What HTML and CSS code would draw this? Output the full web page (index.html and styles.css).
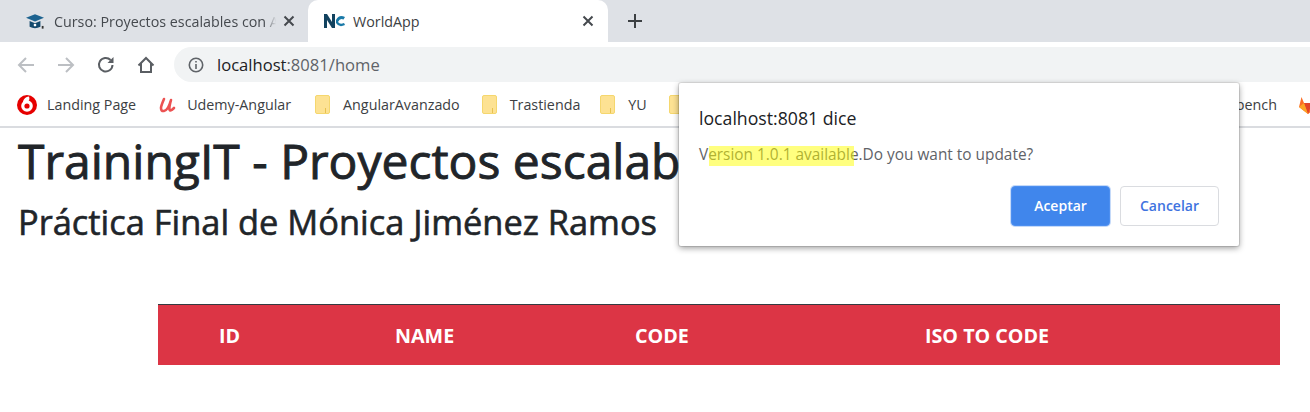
FILE: index.html
```html
<!DOCTYPE html>
<html lang="en">
<head>
  <meta charset="UTF-8">
  <title>WorldApp</title>
  <link rel="stylesheet" href="styles.css">
</head>
<body>
  <!-- Browser chrome -->
  <div class="tabstrip">
    <div class="tab">
      <svg class="tab-icon" viewBox="0 0 20 20"><path d="M0 6.500 10 2.500 20 6.500 10 10.500z" fill="#1d6390"/><path d="M4 10 10 12.500 16 10V16.500Q10 19.500 4 16.500z" fill="#14496d"/><circle cx="10" cy="14.500" r="1.500" fill="#fff"/><rect x="17.500" y="15.500" width="2" height="3" fill="#333"/></svg>
      <span class="tab-title fade">Curso: Proyectos escalables con A</span>
      <svg class="tab-close" viewBox="0 0 12 12"><path d="M1.500 1.500 10.500 10.500M10.500 1.500 1.500 10.500"/></svg>
    </div>
    <div class="tab active">
      <svg class="tab-icon" viewBox="0 0 22 16"><path d="M1 15V1H4L9 9V1H12V15H9L4 7V15z" fill="#12425f"/><path d="M13 7Q16 1 22 4L20.500 6.500Q17 4.500 15 9Q17 12 21 10L22 12Q16 15 13 10z" fill="#1a7aa8"/></svg>
      <span class="tab-title">WorldApp</span>
      <svg class="tab-close" viewBox="0 0 12 12"><path d="M1.500 1.500 10.500 10.500M10.500 1.500 1.500 10.500"/></svg>
    </div>
    <svg class="new-tab" viewBox="0 0 16 16"><path d="M8 1V15M1 8H15"/></svg>
  </div>

  <div class="toolbar">
    <svg class="nav-btn off" viewBox="0 0 20 20"><path d="M18 10H3M10 3 3 10 10 17"/></svg>
    <svg class="nav-btn off" viewBox="0 0 20 20"><path d="M2 10H17M10 3 17 10 10 17"/></svg>
    <svg class="nav-btn" viewBox="0 0 20 20"><path d="M16.500 10A6.800 6.800 0 1 1 14.600 5"/><path class="solid" d="M17.500 2V8H11.500z"/></svg>
    <svg class="nav-btn" viewBox="0 0 20 20"><path d="M2.500 10.500 10 3 17.500 10.500M5 8.500V17H15V8.500"/></svg>
    <div class="omnibox">
      <svg class="info" viewBox="0 0 16 16"><circle cx="8" cy="8" r="6.700"/><path d="M8 7V12M8 4V5.600"/></svg>
      <span class="url">localhost<span class="url-rest">:8081/home</span></span>
    </div>
  </div>

  <div class="bookmarks">
    <div class="bm">
      <svg class="bm-icon" viewBox="0 0 20 20"><circle cx="10" cy="10" r="10" fill="#e60000"/><circle cx="10" cy="11" r="5.800" fill="#fff"/><path d="M12 1.500C8 2 5.500 5 6 9 7.500 7 9.500 6.500 11 6.500 12 5.500 13 4 12 1.500z" fill="#fff"/><circle cx="10" cy="11" r="2.600" fill="#e60000"/></svg>
      <span>Landing Page</span>
    </div>
    <div class="bm wide">
      <svg class="bm-icon udemy" viewBox="0 0 18 16"><path d="M6 2Q3 9 3 11 3 14.500 6 14 10 13.500 13 3 11 10 11.500 12.500 12 15 16 11" fill="none" stroke="#ec5252" stroke-width="2.600" stroke-linecap="round" stroke-linejoin="round"/></svg>
      <span>Udemy-Angular</span>
    </div>
    <div class="bm"><i class="folder"></i><span class="far">AngularAvanzado</span></div>
    <div class="bm tight"><i class="folder"></i><span class="far">Trastienda</span></div>
    <div class="bm"><i class="folder"></i><span class="far">YU</span></div>
    <div class="bm"><i class="folder"></i></div>
    <div class="bm right"><span>Workbench</span></div>
    <svg class="gitlab" viewBox="0 0 20 20"><path d="M10 19 1 12 3.500 2 6 8H14L16.500 2 19 12z" fill="#fc6d26"/><path d="M10 19 6 8H14z" fill="#e24329"/><path d="M10 19 1 12 6 8z" fill="#fca326"/></svg>
  </div>

  <!-- Page -->
  <main class="page">
    <h1>TrainingIT - Proyectos escalables con Angular</h1>
    <h2>Práctica Final de Mónica Jiménez Ramos</h2>
    <table class="countries">
      <thead>
        <tr>
          <th class="col-id">ID</th>
          <th class="col-name">NAME</th>
          <th class="col-code">CODE</th>
          <th>ISO TO CODE</th>
        </tr>
      </thead>
    </table>
  </main>

  <!-- confirm() dialog -->
  <div class="dialog">
    <div class="dialog-title">localhost:8081 dice</div>
    <div class="dialog-msg">Version 1.0.1 available.Do you want to update?<i class="marker"></i></div>
    <div class="dialog-btns">
      <button class="btn primary">Aceptar</button>
      <button class="btn">Cancelar</button>
    </div>
  </div>
</body>
</html>
```

FILE: styles.css
```css
* { box-sizing: border-box; }

html, body { height: 100%; }

body {
  margin: 0;
  overflow: hidden;
  background: #fff;
  font-family: "Open Sans", "Noto Sans", sans-serif;
  color: #212529;
}

/* tabs */
.tabstrip {
  display: flex;
  align-items: center;
  height: 42px;
  background: #dee1e6;
}

.tab {
  display: flex;
  align-items: center;
  width: 300px;
  height: 42px;
  padding: 0 14px 0 25px;
  font-size: 14.300px;
  color: #45494e;
}

.tab:first-child { width: 308px; padding-right: 13px; }

.tab.active {
  background: #fff;
  border-radius: 10px 10px 0 0;
  padding-left: 15px;
  color: #3c4043;
}

.tab-icon { width: 20px; height: 18px; flex: none; }
.tab.active .tab-icon { width: 22px; height: 16px; }

.tab-title {
  flex: 1;
  margin-left: 9px;
  white-space: nowrap;
  overflow: hidden;
}

.tab.active .tab-title { margin-left: 8px; }

.tab-title.fade {
  -webkit-mask-image: linear-gradient(to right, #000 92%, transparent 97%);
  mask-image: linear-gradient(to right, #000 92%, transparent 97%);
}

.tab-close { width: 12px; height: 12px; flex: none; }
.tab-close path { fill: none; stroke: #45494e; stroke-width: 2; }

.new-tab { width: 16px; height: 16px; margin-left: 19px; }
.new-tab path { fill: none; stroke: #3c4043; stroke-width: 2; }

/* toolbar */
.toolbar {
  display: flex;
  align-items: center;
  height: 43px;
  padding: 2px 0 0 16px;
  gap: 20px;
}

.nav-btn { width: 20px; height: 20px; flex: none; }
.nav-btn path { fill: none; stroke: #5a5e63; stroke-width: 2; }
.nav-btn path.solid { fill: #5a5e63; stroke: none; }
.nav-btn.off path { stroke: #bcbfc3; }

.omnibox {
  display: flex;
  align-items: center;
  flex: 1;
  height: 35px;
  margin-left: -2px;
  padding-left: 14px;
  background: #f1f3f4;
  border-radius: 18px 0 0 18px;
}

.info { width: 16px; height: 16px; }
.info circle, .info path { fill: none; stroke: #5f6368; stroke-width: 1.600; }

.url { margin-left: 13px; font-size: 16.600px; color: #202124; }
.url-rest { color: #5f6368; }

/* bookmarks */
.bookmarks {
  display: flex;
  align-items: center;
  height: 43px;
  padding: 0 0 2px 17px;
  border-bottom: 2px solid #dadce0;
  font-size: 14.300px;
  color: #3c4043;
  white-space: nowrap;
  overflow: hidden;
}

.bm { display: flex; align-items: center; margin-right: 22px; }
.bm.wide { margin-right: 24px; }
.bm.tight { margin-right: 20px; }
.bm-icon { width: 20px; height: 20px; margin-right: 10px; flex: none; }
.bm-icon.udemy { width: 18px; height: 16px; margin-right: 11px; }

.folder {
  display: block;
  position: relative;
  flex: none;
  width: 15px;
  height: 19px;
  background: #fde293;
  border: 1px solid #f5d76e;
  border-radius: 2px;
}

.folder::after {
  content: "";
  position: absolute;
  right: 0;
  bottom: 0;
  width: 3px;
  height: 5px;
  border-left: 1px solid #e8c14f;
}

.far { margin-left: 13px; }

.bm.right { margin-left: auto; margin-right: 21px; }
.gitlab { width: 20px; height: 20px; flex: none; margin-right: -8px; }

/* page */
.page { padding: 4px 18px 0; }

h1 {
  margin: 0;
  font-size: 48px;
  font-weight: 400;
  line-height: 1.200;
  white-space: nowrap;
  -webkit-text-stroke: 0.900px #212529;
}

h2 {
  margin: 11px 0 0;
  font-size: 34.400px;
  font-weight: 400;
  line-height: 1.200;
  -webkit-text-stroke: 0.600px #212529;
}

.countries {
  width: 1122px;
  margin: 62px 0 0 140px;
  border-collapse: collapse;
  table-layout: fixed;
}

.countries th {
  height: 61px;
  padding: 0;
  background: #dc3545;
  border-top: 1px solid #343a40;
  color: #fff;
  font-size: 19.700px;
  font-weight: 700;
  text-align: left;
}

.col-id { width: 237px; padding-left: 61px !important; }
.col-name { width: 240px; }
.col-code { width: 290px; }

/* dialog */
.dialog {
  position: absolute;
  top: 83px;
  left: 679px;
  width: 560px;
  height: 163px;
  padding: 23px 20px 0;
  background: #fff;
  border-radius: 2px;
  box-shadow: 0 0 0 1px rgba(0, 0, 0, 0.1), 0 2px 6px rgba(0, 0, 0, 0.4);
}

.dialog-title { font-size: 17.700px; line-height: 24px; color: #202124; }

.dialog-msg {
  position: relative;
  margin-top: 15px;
  font-size: 15.400px;
  line-height: 20px;
  color: #5f6368;
}

/* highlighter stroke laid over the text */
.marker {
  position: absolute;
  top: 1px;
  left: 10px;
  width: 145px;
  height: 20px;
  background: rgba(255, 255, 0, 0.5);
}

.dialog-btns {
  display: flex;
  justify-content: flex-end;
  gap: 10px;
  margin-top: 21px;
}

.btn {
  width: 99px;
  height: 40px;
  padding: 0 0 2px;
  background: #fff;
  border: 1px solid #dadce0;
  border-radius: 4px;
  font-family: inherit;
  font-size: 14px;
  font-weight: 600;
  color: #3f73e0;
}

.btn.primary {
  background: #4086ec;
  border-color: #4d8ff0;
  box-shadow: 0 0 0 1px #c5daf9;
  color: #fff;
}
```
